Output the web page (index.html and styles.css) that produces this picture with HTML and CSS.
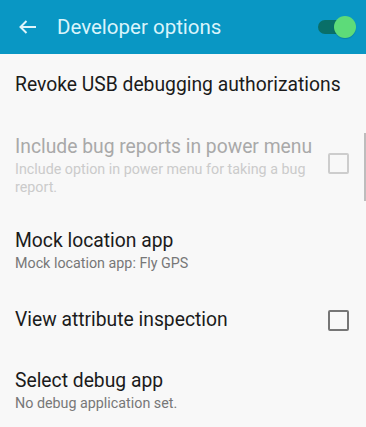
FILE: index.html
```html
<!DOCTYPE html>
<html>
<head>
<meta charset="utf-8">
<link rel="stylesheet" href="styles.css">
</head>
<body>
<div class="screen">
  <header class="appbar">
    <svg class="back" width="18" height="14" viewBox="0 0 18 14">
      <path d="M1.5 7H17M7.5 1L1.5 7L7.5 13" fill="none" stroke="#def4fa" stroke-width="2"/>
    </svg>
    <div class="title">Developer options</div>
    <div class="toggle"><span class="track"></span><span class="thumb"></span></div>
  </header>
  <div class="list">
    <div class="row">
      <div class="text"><div class="t">Revoke USB debugging authorizations</div></div>
    </div>
    <div class="row disabled">
      <div class="text">
        <div class="t">Include bug reports in power menu</div>
        <div class="s">Include option in power menu for taking a bug report.</div>
      </div>
      <div class="check"></div>
    </div>
    <div class="row">
      <div class="text">
        <div class="t">Mock location app</div>
        <div class="s">Mock location app: Fly GPS</div>
      </div>
    </div>
    <div class="row">
      <div class="text"><div class="t">View attribute inspection</div></div>
      <div class="check"></div>
    </div>
    <div class="row">
      <div class="text">
        <div class="t">Select debug app</div>
        <div class="s">No debug application set.</div>
      </div>
    </div>
    <div class="scrollbar"></div>
  </div>
</div>
</body>
</html>
```

FILE: styles.css
```css
html, body {
  margin: 0;
  padding: 0;
  background: #f8f8f8;
}
.screen {
  width: 366px;
  height: 427px;
  overflow: hidden;
  font-family: Roboto, "Liberation Sans", sans-serif;
  background: #f8f8f8;
}
.appbar {
  height: 54px;
  background: #0997c4;
  display: flex;
  align-items: center;
  padding-left: 19px;
  box-sizing: border-box;
}
.back {
  display: block;
  margin-right: 20px;
}
.title {
  color: #d9f4fb;
  font-size: 20.5px;
  flex: 1;
}
.toggle {
  position: relative;
  width: 40px;
  height: 22px;
  margin-right: 9px;
}
.track {
  position: absolute;
  left: 1px;
  top: 4px;
  width: 32px;
  height: 14px;
  border-radius: 7px;
  background: #096f68;
}
.thumb {
  position: absolute;
  left: 17px;
  top: 0;
  width: 22px;
  height: 22px;
  border-radius: 50%;
  background: #5ddb79;
  box-shadow: 0 1px 1px rgba(0,0,0,0.15);
}
.list {
  position: relative;
}
.row {
  min-height: 64px;
  box-sizing: border-box;
  padding: 16px 17px 16px 15px;
  display: flex;
  align-items: center;
}
.text {
  flex: 1;
  padding-right: 14px;
}
.t {
  font-size: 19.3px;
  line-height: 26px;
  color: #1b1b1b;
  white-space: nowrap;
}
.s {
  font-size: 14.3px;
  line-height: 18px;
  color: #777777;
}
.row:first-child .t { margin-top: -2px; }
.disabled .t { color: #a9a9a9; }
.disabled .s { color: #cbcbcb; }
.check {
  width: 21px;
  height: 21px;
  box-sizing: border-box;
  border: 2px solid #767676;
  border-radius: 2px;
  flex: none;
}
.disabled .check { border-color: #cdcdcd; margin-top: -3px; }
.scrollbar {
  position: absolute;
  right: 0;
  top: 79px;
  width: 2px;
  height: 68px;
  background: #bdbdbd;
}
```
